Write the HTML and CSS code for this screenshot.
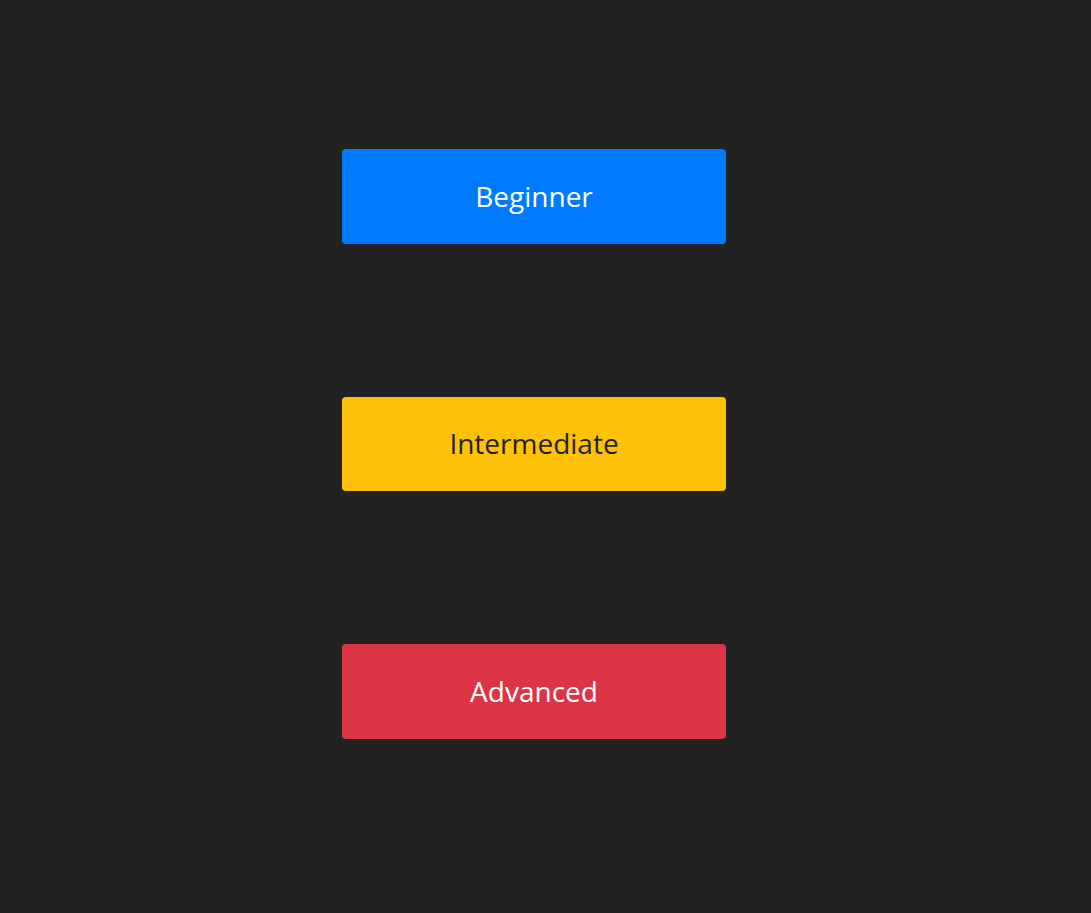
FILE: index.html
```html
<!DOCTYPE html>
<html lang="en">
<head>
<meta charset="utf-8">
<title>Levels</title>
<link rel="stylesheet" href="styles.css">
</head>
<body>
<main class="levels">
  <button class="level level-beginner">Beginner</button>
  <button class="level level-intermediate">Intermediate</button>
  <button class="level level-advanced">Advanced</button>
</main>
</body>
</html>
```
FILE: styles.css
```css
html, body {
  margin: 0;
  padding: 0;
  background: #222222;
  height: 100%;
}
.levels {
  display: flex;
  flex-direction: column;
  gap: 153px;
  padding: 149px 0 0 342px;
}
.level {
  width: 384px;
  height: 94.5px;
  border: none;
  border-radius: 4px;
  font-family: "Open Sans", "Noto Sans", sans-serif;
  font-size: 28px;
  color: #ffffff;
  cursor: pointer;
  padding: 0 0 1px 0;
}
.level-beginner { background: #007bff; }
.level-intermediate { background: #ffc107; color: #212529; }
.level-advanced { background: #dc3545; }
```
